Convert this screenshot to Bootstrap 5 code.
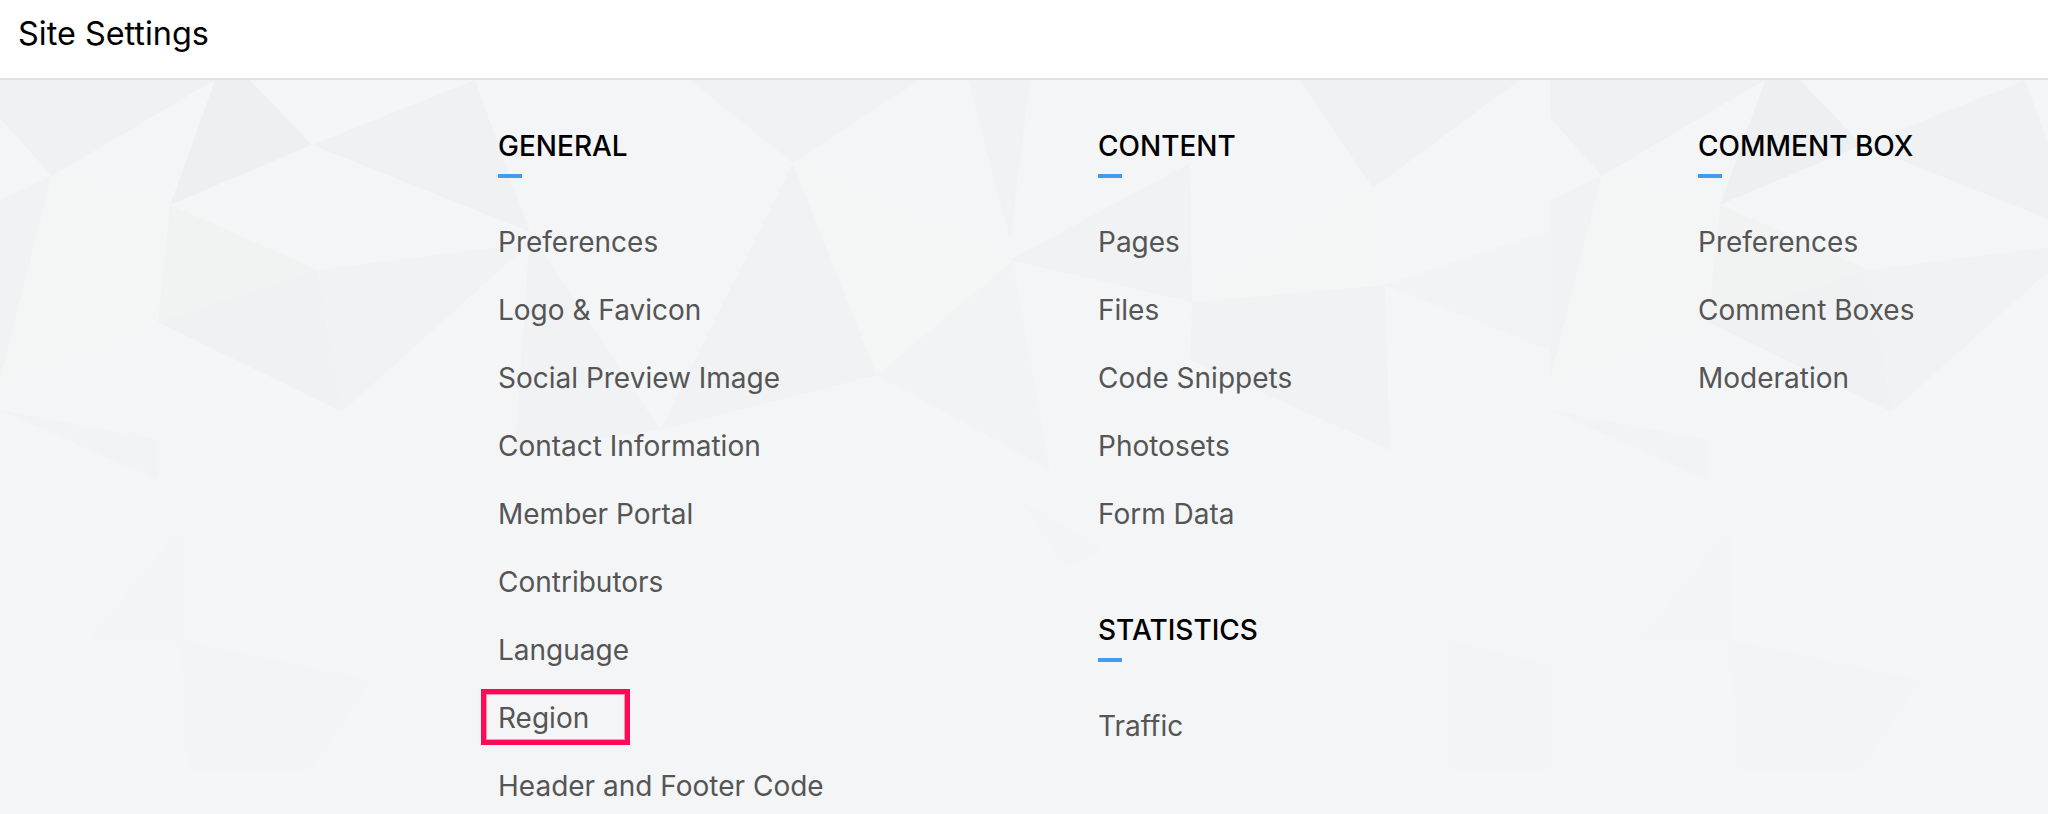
<!DOCTYPE html>
<html lang="en">
<head>
  <meta charset="UTF-8">
  <meta name="viewport" content="width=device-width, initial-scale=1.0">
  <title>Site Settings</title>
  <link href="https://cdn.jsdelivr.net/npm/bootstrap@5.3.7/dist/css/bootstrap.min.css" rel="stylesheet">
  <style>
    body { font-family: Inter, "Liberation Sans", sans-serif; background: #f4f5f7; overflow: hidden; }
    .top-bar { height: 80px; padding: 0 0 9px 18px; border-bottom: 2px solid #dfe2e7; font-size: 32.4px; color: #000; }
    .settings-area { height: 734px; padding: 46px 0 0 498px; background: #f4f5f7; overflow: hidden; }
    .poly-bg { top: 0; left: 0; width: 2048px; height: 734px; }
    .settings-col { flex: 0 0 600px; }
    .group-title { margin: 0 0 8px; font-size: 28px; line-height: 40px; font-weight: 500; color: #000; }
    .group-bar { width: 24px; height: 4px; margin-bottom: 30px; background: #429bf0; }
    .group-list { margin-bottom: 62px; }
    .group-list li { font-size: 28px; line-height: 68px; color: #555; white-space: nowrap; }
    .region-mark { left: -17px; top: 5px; width: 149px; height: 56px; border: 5px solid #ff0a54; box-shadow: inset 0 0 0 1px rgba(255, 10, 84, .4); }
  </style>
</head>
<body>
  <header class="top-bar bg-white d-flex align-items-center">Site Settings</header>

  <main class="settings-area position-relative d-flex">
    <!-- low-poly backdrop, one tile repeats every 1550px -->
    <svg class="poly-bg position-absolute" viewBox="0 0 2048 734" aria-hidden="true">
      <defs>
        <pattern id="polyTile" patternUnits="userSpaceOnUse" width="1550" height="734">
          <g transform="translate(0,-80)">
            <polygon fill="#f0f1f3" points="0,80 215,80 52,176 0,118"/>
            <polygon fill="#eeeff1" points="215,80 250,80 312,145 170,205"/>
            <polygon fill="#f0f1f3" points="312,145 475,80 530,232"/>
            <polygon fill="#f4f5f7" points="52,176 215,80 170,205"/>
            <polygon fill="#f1f2f3" points="0,200 52,176 0,380"/>
            <polygon fill="#f4f6f6" points="52,176 170,205 158,322 0,380"/>
            <polygon fill="#f4f5f7" points="170,205 312,145 318,270"/>
            <polygon fill="#f4f5f7" points="312,145 530,232 318,270"/>
            <polygon fill="#f1f2f2" points="170,205 318,270 158,322"/>
            <polygon fill="#f0f1f3" points="158,322 318,270 342,412"/>
            <polygon fill="#f1f2f3" points="318,270 530,243 342,412"/>
            <polygon fill="#f2f3f4" points="0,410 158,440 158,480"/>
            <polygon fill="#f1f2f3" points="690,80 920,80 793,163"/>
            <polygon fill="#f1f2f3" points="793,163 877,375 660,430"/>
            <polygon fill="#f4f6f6" points="793,163 1013,260 877,375"/>
            <polygon fill="#f1f2f4" points="530,232 660,430 515,450"/>
            <polygon fill="#f1f2f3" points="968,80 1010,240 1030,80"/>
            <polygon fill="#f1f2f3" points="1010,260 1190,163 1192,302"/>
            <polygon fill="#f2f3f4" points="877,375 1013,260 1050,470"/>
            <polygon fill="#f0f1f3" points="1300,80 1520,80 1373,188"/>
            <polygon fill="#f4f6f6" points="1192,302 1373,188 1385,285"/>
            <polygon fill="#f1f2f4" points="1192,302 1385,285 1390,450 1190,360"/>
            <polygon fill="#f2f3f4" points="1385,285 1550,230 1550,350"/>
            <polygon fill="#f4f5f6" points="0,540 330,500 560,600 0,600"/>
            <polygon fill="#f3f4f5" points="90,640 180,530 180,640"/>
            <polygon fill="#f3f4f6" points="180,640 370,680 310,770 190,770"/>
            <polygon fill="#f3f4f5" points="1020,500 1170,590 1090,600"/>
            <polygon fill="#f4f5f6" points="1000,600 1550,600 1550,560 1200,500"/>
            <polygon fill="#f3f4f6" points="1450,640 1650,690 1570,770 1450,770"/>
          </g>
        </pattern>
      </defs>
      <rect width="2048" height="734" fill="url(#polyTile)"/>
    </svg>

    <section class="settings-col position-relative">
      <h6 class="group-title">GENERAL</h6>
      <div class="group-bar"></div>
      <ul class="group-list list-unstyled">
        <li>Preferences</li>
        <li>Logo &amp; Favicon</li>
        <li>Social Preview Image</li>
        <li>Contact Information</li>
        <li>Member Portal</li>
        <li>Contributors</li>
        <li>Language</li>
        <li class="position-relative">Region<span class="region-mark position-absolute"></span></li>
        <li>Header and Footer Code</li>
      </ul>
    </section>

    <section class="settings-col position-relative">
      <h6 class="group-title">CONTENT</h6>
      <div class="group-bar"></div>
      <ul class="group-list list-unstyled">
        <li>Pages</li>
        <li>Files</li>
        <li>Code Snippets</li>
        <li>Photosets</li>
        <li>Form Data</li>
      </ul>
      <h6 class="group-title">STATISTICS</h6>
      <div class="group-bar"></div>
      <ul class="group-list list-unstyled">
        <li>Traffic</li>
      </ul>
    </section>

    <section class="settings-col position-relative">
      <h6 class="group-title">COMMENT BOX</h6>
      <div class="group-bar"></div>
      <ul class="group-list list-unstyled">
        <li>Preferences</li>
        <li>Comment Boxes</li>
        <li>Moderation</li>
      </ul>
    </section>
  </main>

  <script src="https://cdn.jsdelivr.net/npm/bootstrap@5.3.7/dist/js/bootstrap.bundle.min.js"></script>
</body>
</html>
